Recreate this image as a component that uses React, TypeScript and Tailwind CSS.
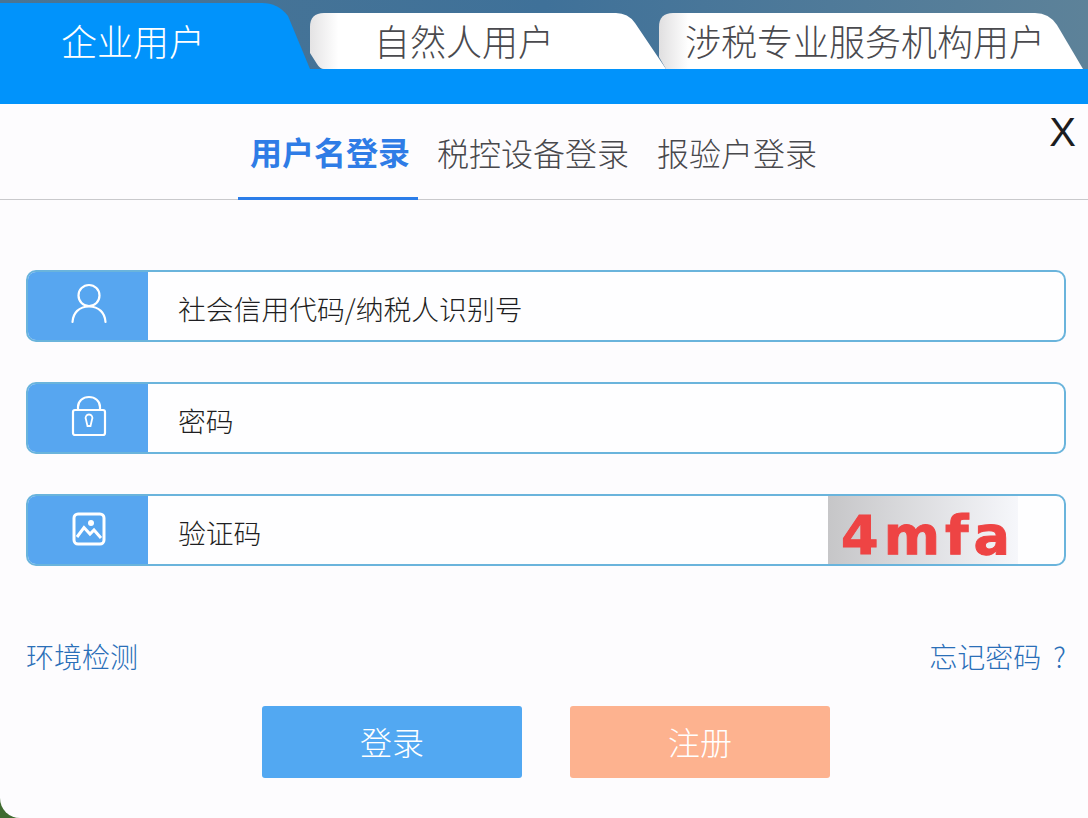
import type { ReactNode } from "react";

function HeaderTabs() {
  return (
    <div className="relative flex h-[69px] items-end bg-gradient-to-r from-[#4a7594] via-[#3f7199] to-[#5d8299]">
      {/* active tab */}
      <div className="relative flex h-[66px] w-[310px] shrink-0 items-start">
        <svg className="absolute inset-0" width="310" height="66" viewBox="0 0 310 66">
          <path d="M0 0H262Q278 0 288 13L310 66H0Z" fill="#0193fb" />
        </svg>
        <span className="relative ml-[61px] mt-[16px] text-[36px] leading-[42px] font-light text-white">企业用户</span>
      </div>

      <div className="relative z-10 flex h-[56px] w-[356px] shrink-0 items-start">
        <svg className="absolute inset-0" width="356" height="56" viewBox="0 0 356 56">
          <defs>
            <linearGradient id="tabA" x1="0" x2="1" y1="0" y2="0">
              <stop offset="0" stopColor="#e4e3e4" />
              <stop offset="0.08" stopColor="#ffffff" />
            </linearGradient>
          </defs>
          <path d="M0 14Q0 0 14 0H306Q318 0 325 10L356 56H14Q10 56 7 51L0 40Z" fill="url(#tabA)" />
        </svg>
        <span className="relative ml-[64px] mt-[6px] text-[36px] leading-[42px] font-light text-[#4a4a4e]">自然人用户</span>
      </div>

      <div className="relative z-20 -ml-[7px] flex h-[56px] w-[424px] shrink-0 items-start">
        <svg className="absolute inset-0" width="424" height="56" viewBox="0 0 424 56">
          <defs>
            <linearGradient id="tabB" x1="0" x2="1" y1="0" y2="0">
              <stop offset="0" stopColor="#e0dfe0" />
              <stop offset="0.07" stopColor="#ffffff" />
            </linearGradient>
          </defs>
          <path d="M0 14Q0 0 14 0H376Q390 0 398 12L424 56H7L0 44Z" fill="url(#tabB)" />
        </svg>
        <span className="relative ml-[26px] mt-[6px] text-[36px] leading-[42px] font-light text-[#4a4a4e]">涉税专业服务机构用户</span>
      </div>
    </div>
  );
}

function LoginNav() {
  return (
    <div className="relative flex h-[96px] items-end border-b border-[#c9c9cc] pl-[238px]">
      <div className="-mb-px flex h-[96px] w-[180px] items-center border-b-[3px] border-[#2b7de9] pl-3">
        <span className="text-[32px] leading-[40px] font-bold text-[#2f7ce6]">用户名登录</span>
      </div>
      <div className="flex h-[95px] items-center pl-[19px]">
        <span className="text-[32px] leading-[40px] font-light text-[#48484c]">税控设备登录</span>
      </div>
      <div className="flex h-[95px] items-center pl-[28px]">
        <span className="text-[32px] leading-[40px] font-light text-[#48484c]">报验户登录</span>
      </div>
      <span className="absolute right-[12px] top-[4px] font-['Liberation_Sans',sans-serif] text-[40px] leading-[48px] text-[#1c1c20]">X</span>
    </div>
  );
}

function Field({ icon, label, children }: { icon: ReactNode; label: string; children?: ReactNode }) {
  return (
    <div className="flex h-[72px] overflow-hidden rounded-[10px] border-2 border-[#6ab4dc] bg-[#fefeff]">
      <div className="-ml-[2px] -my-[2px] flex w-[122px] shrink-0 items-start justify-center bg-[#57a6f0] pl-[4px] pt-[13px]">{icon}</div>
      <span className="ml-[30px] self-center pt-[4px] text-[27.8px] leading-[36px] font-light text-[#1e1e22]">{label}</span>
      {children}
    </div>
  );
}

const UserIcon = (
  <svg width="36" height="42" viewBox="0 0 36 42" fill="none" stroke="#fff" strokeWidth="2.2" strokeLinecap="round">
    <circle cx="18" cy="12.5" r="10.5" />
    <path d="M1.5 39C2 30 8 23.5 18 23.5S34 30 34.5 39" />
  </svg>
);

const LockIcon = (
  <svg width="36" height="42" viewBox="0 0 36 42" fill="none" stroke="#fff" strokeWidth="2.2">
    <path d="M7 15V12C7 6 12 2 18 2S29 6 29 12V15" />
    <rect x="2" y="15" width="32" height="25" rx="2" />
    <path d="M15 24.5a3.4 3.4 0 1 1 6 0L19.5 31h-3Z" strokeWidth="1.8" />
  </svg>
);

const ImageIcon = (
  <svg width="34" height="34" viewBox="0 0 34 34" fill="none" stroke="#fff" className="mt-[5px]">
    <rect x="2" y="2" width="30" height="30" rx="4" strokeWidth="3" />
    <circle cx="19" cy="11" r="3" fill="#fff" stroke="none" />
    <path d="M5 25L12 15.5L18 22L22 18L29 26" strokeWidth="3" />
  </svg>
);

export default function App() {
  return (
    <div className="h-[818px] w-[1088px] overflow-hidden bg-[#3f6a30] font-['Noto_Sans_CJK_SC','Liberation_Sans',sans-serif]">
      <HeaderTabs />
      <div className="h-[35px] bg-[#0193fb]" />

      <div className="h-[714px] rounded-bl-[20px] bg-[#fdfcfe]">
        <LoginNav />

        <div className="ml-[26px] mt-[70px] w-[1040px] space-y-[40px]">
          <Field icon={UserIcon} label="社会信用代码/纳税人识别号" />
          <Field icon={LockIcon} label="密码" />
          <Field icon={ImageIcon} label="验证码">
            <div className="ml-auto mr-[46px] flex h-[68px] w-[190px] items-center justify-center bg-gradient-to-r from-[#c6c6c8] to-[#f6f7fb] pl-[10px] pt-[12px]">
              <span className="font-['DejaVu_Sans',sans-serif] text-[54px] leading-[56px] font-bold tracking-[5px] text-[#ee4444] [-webkit-text-stroke:1px_#ee4444]">4mfa</span>
            </div>
          </Field>
        </div>

        <div className="ml-[26px] mr-[22px] mt-[70px] flex items-center justify-between">
          <span className="text-[28px] leading-[40px] font-light text-[#2a6fb8]">环境检测</span>
          <span className="text-[28px] leading-[40px] font-light text-[#2a6fb8]">忘记密码<span className="ml-[12px]">?</span></span>
        </div>

        <div className="mt-[30px] flex justify-center gap-[48px] pl-[4px]">
          <button className="h-[72px] w-[260px] rounded-[3px] bg-[#52a8f2] pb-[3px] text-[32px] font-light text-white">登录</button>
          <button className="h-[72px] w-[260px] rounded-[3px] bg-[#fdb28f] pb-[3px] text-[32px] font-light text-white">注册</button>
        </div>
      </div>
    </div>
  );
}
